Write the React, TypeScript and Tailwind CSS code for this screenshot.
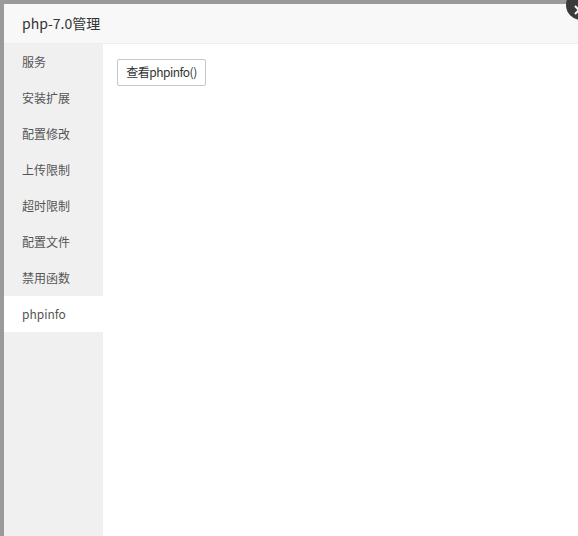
import React from 'react';

const menu = ['服务', '安装扩展', '配置修改', '上传限制', '超时限制', '配置文件', '禁用函数', 'phpinfo'];

export default function App() {
  const active = 'phpinfo';

  return (
    <div
      className="relative h-[536px] w-[578px] overflow-hidden bg-[#9a9a9a] pl-[4px] pt-[4px]"
      style={{ fontFamily: '"Noto Sans CJK SC", "Noto Sans", sans-serif' }}
    >
      {/* dialog */}
      <div className="flex h-[540px] w-[590px] flex-col bg-white">
        <div className="flex h-[40px] shrink-0 items-center border-b border-[#eee] bg-[#f8f8f8] pl-[18px] text-[14px] text-[#333]">
          php-7.0管理
        </div>
        <div className="flex flex-1">
          <div className="w-[99px] shrink-0 bg-[#f0f0f0]">
            {menu.map((m) => (
              <div
                key={m}
                className={`flex h-[36px] items-center pl-[18px] text-[12px] leading-none text-[#555] ${
                  m === active ? 'bg-white' : ''
                }`}
              >
                {m}
              </div>
            ))}
          </div>
          <div className="flex-1 pl-[14px] pt-[14px]">
            <button
              type="button"
              className="h-[27px] w-[89px] rounded-[2px] border border-[#c8c8c8] bg-white text-[12px] tracking-[-0.5px] text-[#333]"
            >
              查看phpinfo()
            </button>
          </div>
        </div>
      </div>

      {/* close button */}
      <div className="absolute left-[566px] top-[-10px] flex h-[30px] w-[30px] items-center justify-center rounded-full bg-[#3a3a3a]">
        <svg width="12" height="12" viewBox="0 0 12 12" className="ml-[-4px] mt-[10px]">
          <path d="M2 2 L10 10 M10 2 L2 10" stroke="white" strokeWidth="2" />
        </svg>
      </div>
    </div>
  );
}
